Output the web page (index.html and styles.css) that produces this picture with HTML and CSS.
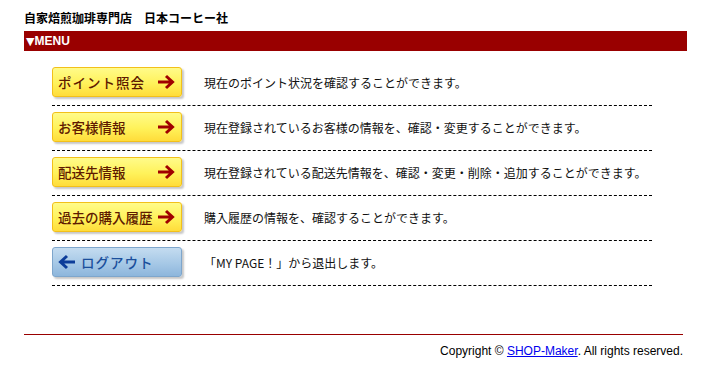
FILE: index.html
```html
<html>
<head>
	<title>MY PAGE | 自家焙煎珈琲専門店　日本コーヒー社</title>
	<meta charset="utf-8">
	<link rel="stylesheet" href="styles.css">
</head>
<body>
	<div id="page">
		<h1 id="shopName">自家焙煎珈琲専門店　日本コーヒー社</h1>
		<div id="menuBar"><span class="tri">▼</span>MENU</div>

		<ul id="menuList">
			<li class="menuRow">
				<a class="menuButton yellow" href="#">
					<span class="label spaced">ポイント照会</span>
					<svg class="arrow" width="18" height="16" viewBox="0 0 18 16"><path d="M1 8 H15 M9 2 L15.5 8 L9 14" fill="none" stroke="#a00000" stroke-width="3"/></svg>
				</a>
				<span class="desc">現在のポイント状況を確認することができます。</span>
			</li>
			<li class="menuRow">
				<a class="menuButton yellow" href="#">
					<span class="label">お客様情報</span>
					<svg class="arrow" width="18" height="16" viewBox="0 0 18 16"><path d="M1 8 H15 M9 2 L15.5 8 L9 14" fill="none" stroke="#a00000" stroke-width="3"/></svg>
				</a>
				<span class="desc">現在登録されているお客様の情報を、確認・変更することができます。</span>
			</li>
			<li class="menuRow">
				<a class="menuButton yellow" href="#">
					<span class="label">配送先情報</span>
					<svg class="arrow" width="18" height="16" viewBox="0 0 18 16"><path d="M1 8 H15 M9 2 L15.5 8 L9 14" fill="none" stroke="#a00000" stroke-width="3"/></svg>
				</a>
				<span class="desc">現在登録されている配送先情報を、確認・変更・削除・追加することができます。</span>
			</li>
			<li class="menuRow">
				<a class="menuButton yellow" href="#">
					<span class="label">過去の購入履歴</span>
					<svg class="arrow" width="18" height="16" viewBox="0 0 18 16"><path d="M1 8 H15 M9 2 L15.5 8 L9 14" fill="none" stroke="#a00000" stroke-width="3"/></svg>
				</a>
				<span class="desc">購入履歴の情報を、確認することができます。</span>
			</li>
			<li class="menuRow">
				<a class="menuButton blue" href="#">
					<svg class="backArrow" width="18" height="16" viewBox="0 0 18 16"><path d="M17 8 H3 M9 2 L2.5 8 L9 14" fill="none" stroke="#0d3d99" stroke-width="3"/></svg>
					<span class="label spaced">ログアウト</span>
				</a>
				<span class="desc">「MY PAGE！」から退出します。</span>
			</li>
		</ul>

		<div id="footer">
			Copyright &copy; <a href="#">SHOP-Maker</a>. All rights reserved.
		</div>
	</div>
</body>
</html>
```

FILE: styles.css
```css
body {
	margin: 0;
	background-color: #ffffff;
	font-family: "Noto Sans CJK JP", "Liberation Sans", sans-serif;
	color: #000000;
}
#page {
	width: 663px;
	padding-left: 24px;
}
#shopName {
	margin: 0;
	padding-top: 10px;
	font-size: 12px;
	line-height: 16px;
	font-weight: bold;
}
#menuBar {
	margin-top: 5px;
	height: 20px;
	line-height: 20px;
	padding-left: 2px;
	background-color: #990000;
	color: #ffffff;
	font-family: "Liberation Sans", Arial, sans-serif;
	font-size: 12px;
	font-weight: bold;
}
#menuBar .tri {
	font-family: "DejaVu Sans", sans-serif;
	font-size: 11px;
}
#menuList {
	list-style: none;
	margin: 10px 0 0 28px;
	padding: 0;
	width: 600px;
}
.menuRow {
	display: flex;
	align-items: center;
	padding: 6px 0 8px 0;
	border-bottom: 1px dashed #000000;
}
.menuButton {
	display: flex;
	align-items: center;
	box-sizing: border-box;
	width: 130px;
	height: 30px;
	padding: 0 4px 0 5px;
	border-radius: 3px;
	box-shadow: 2px 2px 2px rgba(0, 0, 0, 0.22);
	text-decoration: none;
	font-size: 13.5px;
	font-weight: 500;
}
.spaced {
	letter-spacing: 1px;
}
.yellow {
	justify-content: space-between;
	border: 1px solid #f2c01a;
	background: linear-gradient(#fffb8a, #fff25a 55%, #ffdc3a);
	color: #5e1a00;
}
.blue {
	border: 1px solid #7ea6cc;
	background: linear-gradient(#c4dcf0, #a6c8e6 55%, #8db6dc);
	color: #1b4f9c;
}
.blue .label {
	margin-left: 5px;
}
.arrow {
	margin-right: 2px;
}
.desc {
	margin-left: 22px;
	font-size: 12px;
	color: #111111;
}
#footer {
	margin-top: 48px;
	margin-right: 4px;
	padding-top: 8px;
	border-top: 1px solid #990000;
	text-align: right;
	font-family: "Liberation Sans", Arial, sans-serif;
	font-size: 12px;
	line-height: 16px;
}
#footer a {
	color: #0000ee;
}
```
